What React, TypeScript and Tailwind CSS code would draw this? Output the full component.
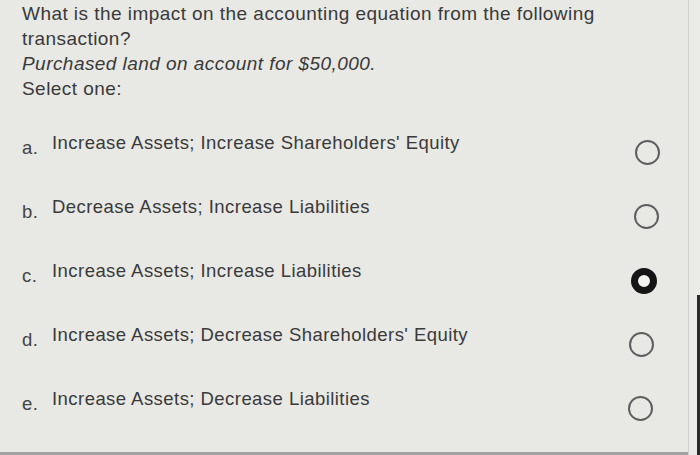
import React from 'react'

interface Option { letter: string; text: string; selected: boolean; radioMr: string }

const options: Option[] = [
  { letter: 'a.', text: "Increase Assets; Increase Shareholders' Equity", selected: false, radioMr: 'mr-[28px]' },
  { letter: 'b.', text: 'Decrease Assets; Increase Liabilities', selected: false, radioMr: 'mr-[29px]' },
  { letter: 'c.', text: 'Increase Assets; Increase Liabilities', selected: true, radioMr: 'mr-[31px]' },
  { letter: 'd.', text: "Increase Assets; Decrease Shareholders' Equity", selected: false, radioMr: 'mr-[34px]' },
  { letter: 'e.', text: 'Increase Assets; Decrease Liabilities', selected: false, radioMr: 'mr-[35px]' },
]

function Radio({ selected }: { selected: boolean }) {
  return selected ? (
    <div className="w-[26px] h-[26px] rounded-full border-[7px] border-[#151515] bg-[#f2f2ef]" />
  ) : (
    <div className="w-[25px] h-[25px] rounded-full border-2 border-[#5e5e5e]" />
  )
}

export default function App() {
  return (
    <div
      className="w-[700px] h-[455px] flex bg-[#e8e8e4] text-[#3a3a3a] overflow-hidden"
      style={{ fontFamily: '"Liberation Sans", Arial, sans-serif' }}
    >
      <div className="flex-1 flex flex-col border-b-[3px] border-[#a2a2a0]">
        {/* Question */}
        <div className="pl-[22px] pt-[1px] text-[19px] leading-[25px] tracking-[0.45px]">
          <div>What is the impact on the accounting equation from the following</div>
          <div>transaction?</div>
          <div className="italic">Purchased land on account for $50,000.</div>
          <div>Select one:</div>
        </div>

        {/* Options */}
        <div className="mt-[29px] flex flex-col">
          {options.map(o => (
            <div key={o.letter} className="h-[64px] flex items-start text-[18.5px] leading-[25px] tracking-[0.45px]">
              <div className="w-[30px] pl-[22px] mt-[5px] box-content shrink-0 text-[#444]">{o.letter}</div>
              <div>{o.text}</div>
              <div className={`ml-auto mt-[10px] ${o.radioMr}`}>
                <Radio selected={o.selected} />
              </div>
            </div>
          ))}
        </div>
      </div>

      {/* right edge of the screen */}
      <div className="w-[12px] flex flex-col border-l border-[#d2d2ce] bg-[#ebebe8]">
        <div className="flex-1" />
        <div className="h-[160px] ml-auto w-[3px] bg-[#2a2a2a]" />
      </div>
    </div>
  )
}
